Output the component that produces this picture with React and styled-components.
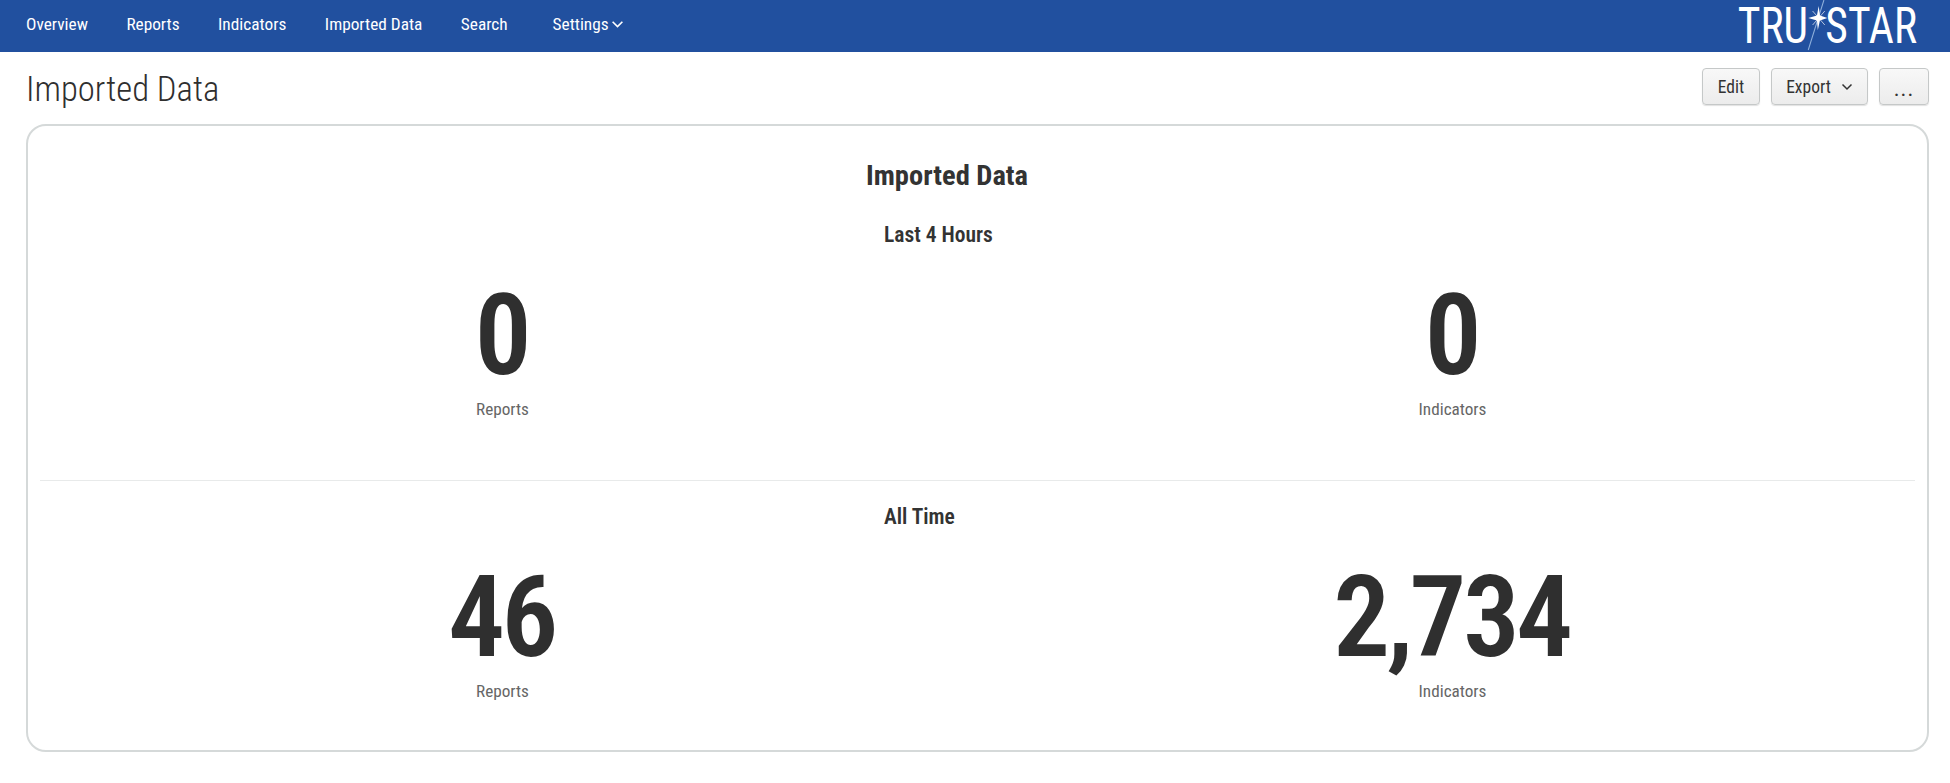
import React from "react";
import styled, { createGlobalStyle } from "styled-components";

const GlobalStyle = createGlobalStyle`
  html, body {
    margin: 0;
    padding: 0;
    background: #fff;
    font-family: Roboto, "Liberation Sans", sans-serif;
    font-stretch: 75%;
    color: #333;
  }
`;

const NavBar = styled.header`
  height: 52px;
  background: #21509f;
  display: flex;
  align-items: center;
  justify-content: space-between;
  padding: 0 33px 0 26px;
`;

const NavLinks = styled.nav`
  display: flex;
  align-items: center;
  padding-bottom: 4px;
`;

const NavLink = styled.a`
  display: flex;
  align-items: center;
  gap: 2px;
  color: #fff;
  font-size: 17.3px;
  margin-right: ${(p) => p.$gap || 38.5}px;
`;

const Logo = styled.div`
  display: flex;
  align-items: center;
  height: 52px;
  color: #fff;
  font-size: 50px;
  font-weight: 400;
  line-height: 56px;
  transform: scaleX(0.87);
  transform-origin: right center;
`;

const LogoStar = styled.svg`
  width: 30px;
  height: 52px;
  margin: 0 -5px;
`;

const TitleRow = styled.div`
  display: flex;
  justify-content: space-between;
  align-items: center;
  height: 72px;
  padding: 0 21px 0 26px;
`;

const PageTitle = styled.h1`
  margin: 0;
  padding-top: 2px;
  font-size: 34.7px;
  font-weight: 300;
  color: #2f2f2f;
`;

const Buttons = styled.div`
  display: flex;
  gap: 11px;
  padding-bottom: 3px;
`;

const Button = styled.button`
  height: 37px;
  width: ${(p) => p.$width}px;
  display: flex;
  align-items: center;
  justify-content: center;
  gap: 10px;
  padding: 0;
  font-family: inherit;
  font-stretch: 75%;
  font-size: 17.5px;
  color: #333;
  border: 1px solid #c5c8c8;
  border-radius: 4px;
  background: linear-gradient(#f8f8f8, #ececec);
  box-shadow: 0 1px 1px rgba(0, 0, 0, 0.12);
`;

const Dots = styled.span`
  font-size: 22px;
  line-height: 37px;
  letter-spacing: 1px;
  padding-top: 3px;
`;

const Panel = styled.section`
  margin: 0 21px 0 26px;
  height: 628px;
  box-sizing: border-box;
  border: 2px solid #d5d9d9;
  border-radius: 20px;
  padding: 0 12px;
`;

const PanelTitle = styled.h2`
  margin: 0;
  padding: 33px 0 0 826px;
  font-size: 28.5px;
  line-height: 34px;
  font-weight: 700;
  color: #333;
`;

const GroupTitle = styled.h3`
  margin: 0;
  padding: ${(p) => p.$top}px 0 0 844px;
  font-size: 21.5px;
  line-height: 24px;
  font-weight: 600;
  color: #333;
`;

const Stats = styled.div`
  display: grid;
  grid-template-columns: 1fr 1fr;
  column-gap: 25px;
  padding-top: ${(p) => p.$top}px;
`;

const Stat = styled.div`
  display: flex;
  flex-direction: column;
  align-items: center;
`;

const Value = styled.div`
  padding-right: 2px;
  font-size: 113px;
  line-height: 118px;
  font-weight: 620;
  letter-spacing: -3.5px;
  color: #2f2f2f;
`;

const Label = styled.div`
  margin-top: 4px;
  font-size: 17.2px;
  line-height: 20px;
  color: #666;
`;

const Divider = styled.hr`
  margin: 61px 0 0;
  border: 0;
  border-top: 1px solid #e8eaea;
`;

const Chevron = ({ size }) => (
  <svg width={size} height={size} viewBox="0 0 12 12" fill="none" stroke="currentColor" strokeWidth="1.5">
    <path d="M1.5 3.5 L6 8 L10.5 3.5" />
  </svg>
);

export default function App() {
  return (
    <>
      <GlobalStyle />
      <NavBar>
        <NavLinks>
          <NavLink>Overview</NavLink>
          <NavLink>Reports</NavLink>
          <NavLink>Indicators</NavLink>
          <NavLink>Imported Data</NavLink>
          <NavLink $gap={45}>Search</NavLink>
          <NavLink>
            Settings
            <Chevron size={13} />
          </NavLink>
        </NavLinks>
        <Logo>
          <span>TRU</span>
          <LogoStar viewBox="0 0 30 52">
            <path d="M23 0 L5 50" stroke="#8fb0dc" strokeWidth="1.2" />
            <path d="M17 6 L18.4 15.6 L27 18 L18.4 20.4 L16 30 L15 20.4 L5 18 L15 15.6 Z" fill="#fff" />
            <path d="M10 11 L24 25 M24 11 L10 25" stroke="#fff" strokeWidth="0.7" />
          </LogoStar>
          <span>STAR</span>
        </Logo>
      </NavBar>
      <TitleRow>
        <PageTitle>Imported Data</PageTitle>
        <Buttons>
          <Button $width={58}>Edit</Button>
          <Button $width={97}>
            Export
            <Chevron size={12} />
          </Button>
          <Button $width={50}>
            <Dots>...</Dots>
          </Button>
        </Buttons>
      </TitleRow>
      <Panel>
        <PanelTitle>Imported Data</PanelTitle>
        <GroupTitle $top={30}>Last 4 Hours</GroupTitle>
        <Stats $top={30}>
          <Stat>
            <Value>0</Value>
            <Label>Reports</Label>
          </Stat>
          <Stat>
            <Value>0</Value>
            <Label>Indicators</Label>
          </Stat>
        </Stats>
        <Divider />
        <GroupTitle $top={24}>All Time</GroupTitle>
        <Stats $top={30}>
          <Stat>
            <Value>46</Value>
            <Label>Reports</Label>
          </Stat>
          <Stat>
            <Value>2,734</Value>
            <Label>Indicators</Label>
          </Stat>
        </Stats>
      </Panel>
    </>
  );
}
